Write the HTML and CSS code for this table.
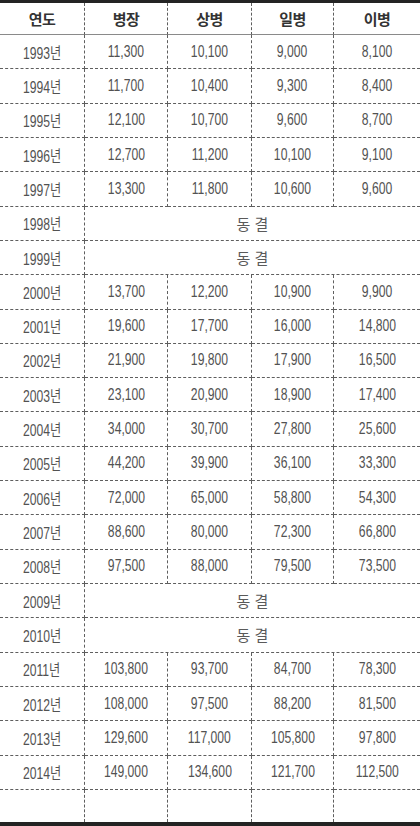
FILE: index.html
```html
<!DOCTYPE html>
<html lang="ko">
<head>
<meta charset="utf-8">
<link rel="stylesheet" href="styles.css">
</head>
<body>
<div class="grid">
  <div class="c h">연도</div><div class="c h">병장</div><div class="c h">상병</div><div class="c h">일병</div><div class="c h last">이병</div>

  <div class="c"><span class="n">1993년</span></div><div class="c"><span class="n">11,300</span></div><div class="c"><span class="n">10,100</span></div><div class="c"><span class="n">9,000</span></div><div class="c last"><span class="n">8,100</span></div>
  <div class="c"><span class="n">1994년</span></div><div class="c"><span class="n">11,700</span></div><div class="c"><span class="n">10,400</span></div><div class="c"><span class="n">9,300</span></div><div class="c last"><span class="n">8,400</span></div>
  <div class="c"><span class="n">1995년</span></div><div class="c"><span class="n">12,100</span></div><div class="c"><span class="n">10,700</span></div><div class="c"><span class="n">9,600</span></div><div class="c last"><span class="n">8,700</span></div>
  <div class="c"><span class="n">1996년</span></div><div class="c"><span class="n">12,700</span></div><div class="c"><span class="n">11,200</span></div><div class="c"><span class="n">10,100</span></div><div class="c last"><span class="n">9,100</span></div>
  <div class="c"><span class="n">1997년</span></div><div class="c"><span class="n">13,300</span></div><div class="c"><span class="n">11,800</span></div><div class="c"><span class="n">10,600</span></div><div class="c last"><span class="n">9,600</span></div>
  <div class="c"><span class="n">1998년</span></div><div class="c span last"><span class="f">동 결</span></div>
  <div class="c"><span class="n">1999년</span></div><div class="c span last"><span class="f">동 결</span></div>
  <div class="c"><span class="n">2000년</span></div><div class="c"><span class="n">13,700</span></div><div class="c"><span class="n">12,200</span></div><div class="c"><span class="n">10,900</span></div><div class="c last"><span class="n">9,900</span></div>
  <div class="c"><span class="n">2001년</span></div><div class="c"><span class="n">19,600</span></div><div class="c"><span class="n">17,700</span></div><div class="c"><span class="n">16,000</span></div><div class="c last"><span class="n">14,800</span></div>
  <div class="c"><span class="n">2002년</span></div><div class="c"><span class="n">21,900</span></div><div class="c"><span class="n">19,800</span></div><div class="c"><span class="n">17,900</span></div><div class="c last"><span class="n">16,500</span></div>
  <div class="c"><span class="n">2003년</span></div><div class="c"><span class="n">23,100</span></div><div class="c"><span class="n">20,900</span></div><div class="c"><span class="n">18,900</span></div><div class="c last"><span class="n">17,400</span></div>
  <div class="c"><span class="n">2004년</span></div><div class="c"><span class="n">34,000</span></div><div class="c"><span class="n">30,700</span></div><div class="c"><span class="n">27,800</span></div><div class="c last"><span class="n">25,600</span></div>
  <div class="c"><span class="n">2005년</span></div><div class="c"><span class="n">44,200</span></div><div class="c"><span class="n">39,900</span></div><div class="c"><span class="n">36,100</span></div><div class="c last"><span class="n">33,300</span></div>
  <div class="c"><span class="n">2006년</span></div><div class="c"><span class="n">72,000</span></div><div class="c"><span class="n">65,000</span></div><div class="c"><span class="n">58,800</span></div><div class="c last"><span class="n">54,300</span></div>
  <div class="c"><span class="n">2007년</span></div><div class="c"><span class="n">88,600</span></div><div class="c"><span class="n">80,000</span></div><div class="c"><span class="n">72,300</span></div><div class="c last"><span class="n">66,800</span></div>
  <div class="c"><span class="n">2008년</span></div><div class="c"><span class="n">97,500</span></div><div class="c"><span class="n">88,000</span></div><div class="c"><span class="n">79,500</span></div><div class="c last"><span class="n">73,500</span></div>
  <div class="c"><span class="n">2009년</span></div><div class="c span last"><span class="f">동 결</span></div>
  <div class="c"><span class="n">2010년</span></div><div class="c span last"><span class="f">동 결</span></div>
  <div class="c"><span class="n">2011년</span></div><div class="c"><span class="n">103,800</span></div><div class="c"><span class="n">93,700</span></div><div class="c"><span class="n">84,700</span></div><div class="c last"><span class="n">78,300</span></div>
  <div class="c"><span class="n">2012년</span></div><div class="c"><span class="n">108,000</span></div><div class="c"><span class="n">97,500</span></div><div class="c"><span class="n">88,200</span></div><div class="c last"><span class="n">81,500</span></div>
  <div class="c"><span class="n">2013년</span></div><div class="c"><span class="n">129,600</span></div><div class="c"><span class="n">117,000</span></div><div class="c"><span class="n">105,800</span></div><div class="c last"><span class="n">97,800</span></div>
  <div class="c"><span class="n">2014년</span></div><div class="c"><span class="n">149,000</span></div><div class="c"><span class="n">134,600</span></div><div class="c"><span class="n">121,700</span></div><div class="c last"><span class="n">112,500</span></div>

  <div class="c e"></div><div class="c e"></div><div class="c e"></div><div class="c e"></div><div class="c e last"></div>
</div>
</body>
</html>
```

FILE: styles.css
```css
html, body {
  margin: 0;
  padding: 0;
  background: #ffffff;
}

body {
  width: 420px;
  height: 826px;
  overflow: hidden;
  font-family: "Liberation Sans", "Noto Sans CJK KR", sans-serif;
  color: #525252;
}

.grid {
  display: grid;
  grid-template-columns: 85px 83px 84px 82px 86px;
  grid-template-rows: 32px repeat(22, 34.32px) 32px;
  border-top: 3px solid #232323;
  border-bottom: 4px solid #232323;
  box-sizing: border-box;
  width: 420px;
  height: 826px;
}

.c {
  box-sizing: border-box;
  display: flex;
  align-items: center;
  justify-content: center;
  border-right: 1px dashed #5e5e5e;
  border-bottom: 1px dashed #5e5e5e;
  font-size: 16px;
  white-space: nowrap;
}

.c.last {
  border-right: none;
}

.c.h {
  border-bottom: 1px solid #8a8a8a;
  font-family: "Noto Sans CJK KR", sans-serif;
  font-weight: 700;
  font-size: 15px;
  color: #333333;
  letter-spacing: -0.5px;
}

.c.e {
  border-bottom: none;
}

.span {
  grid-column: span 4;
}

.n {
  display: inline-block;
  transform: scaleX(0.76);
  letter-spacing: 0;
}

.f {
  font-family: "Noto Sans CJK KR", sans-serif;
  font-size: 15px;
  color: #5a5a5a;
}
```
